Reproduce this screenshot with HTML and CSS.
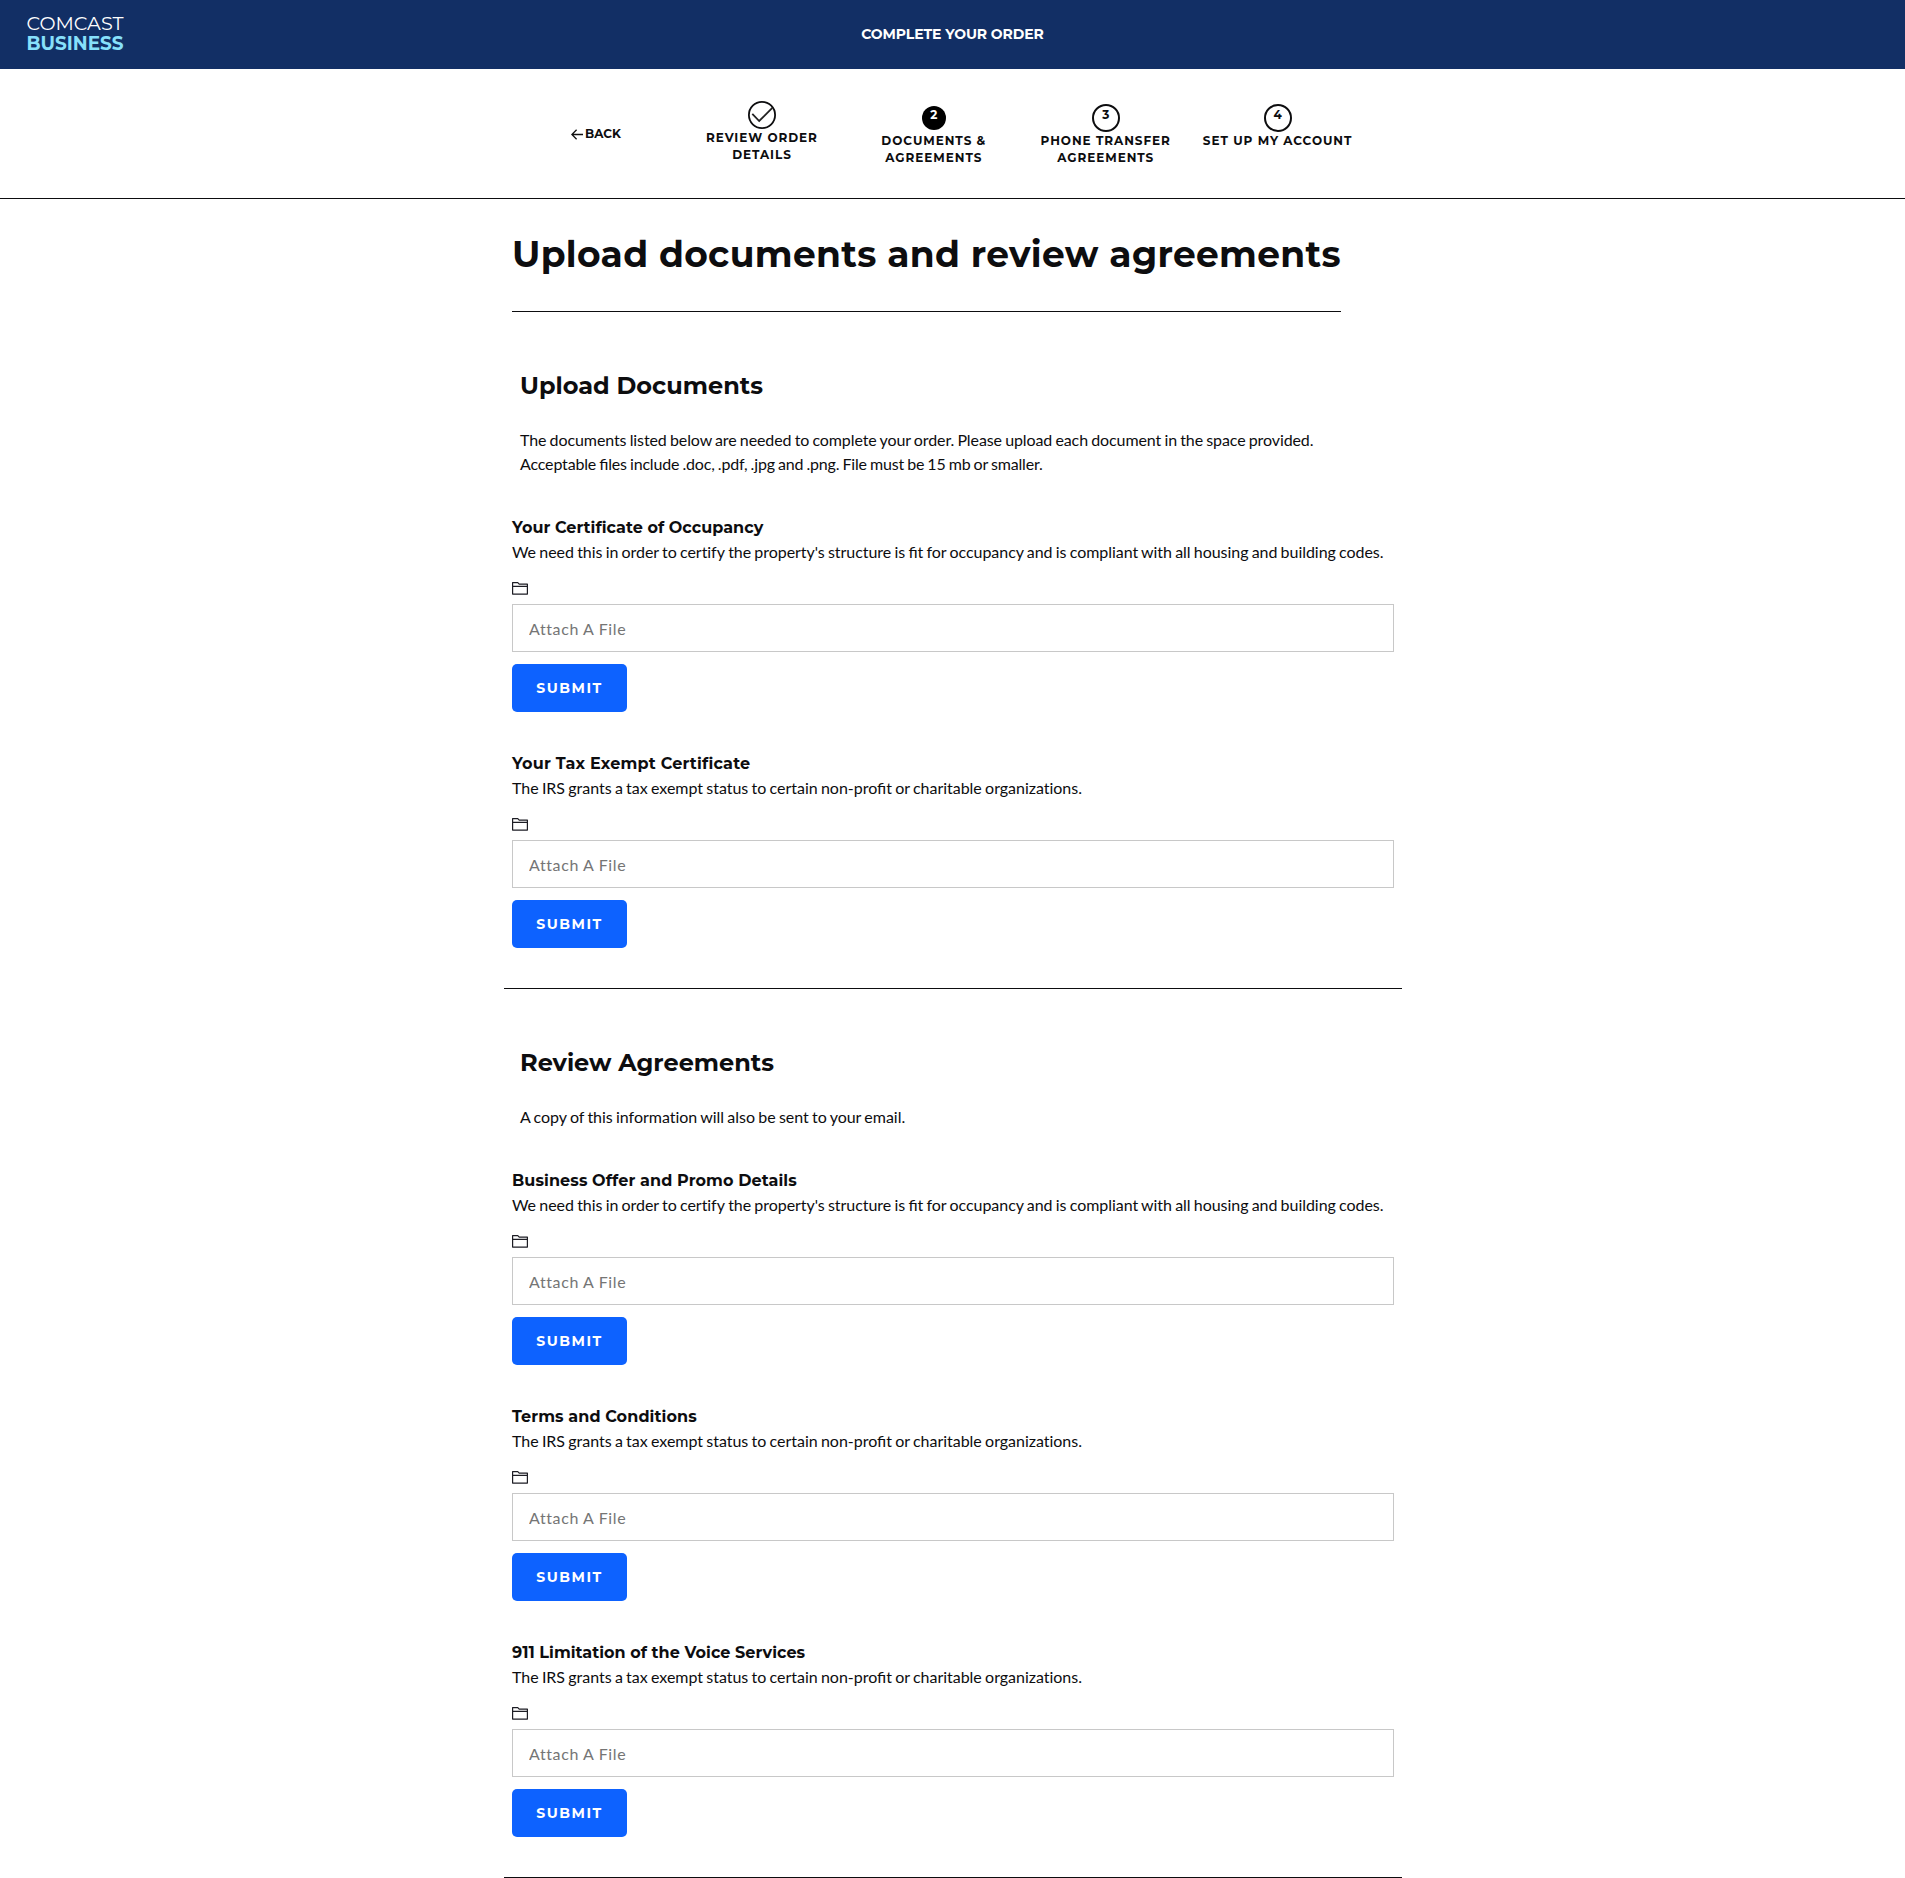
FILE: index.html
```
<!DOCTYPE html>
<html lang="en">
<head>
<meta charset="utf-8">
<title>Complete Your Order</title>
<link rel="stylesheet" href="styles.css">
</head>
<body>
<svg width="0" height="0" class="sprite" aria-hidden="true">
  <symbol id="folder" viewBox="0 0 16 13">
    <path d="M.6 12.1V.6h5.2l1.4 1.5h8.2v10zM.6 4.3h14.8" fill="none" stroke="#1d1d24" stroke-width="1.2" stroke-linejoin="round"/>
  </symbol>
</svg>
<header class="topbar">
  <svg class="logo" width="98" height="38" viewBox="0 0 98 38" role="img" aria-label="Comcast Business">
    <text class="logo-top" x="-.5" y="17.3" textLength="97" lengthAdjust="spacingAndGlyphs">COMCAST</text>
    <text class="logo-bottom" x="-.5" y="36.5" textLength="97" lengthAdjust="spacingAndGlyphs">BUSINESS</text>
  </svg>
  <div class="topbar-title">COMPLETE YOUR ORDER</div>
</header>
<nav class="stepper">
  <div class="steps">
    <a class="back"><svg width="12" height="11" viewBox="0 0 12 11"><path d="M12 5.5H1M5.6 .8L.9 5.5l4.7 4.7" fill="none" stroke="#111" stroke-width="1.3"/></svg>BACK</a>
    <div class="step done"><svg class="check" width="28" height="28" viewBox="0 0 28 28"><circle cx="14" cy="14" r="13.1" fill="none" stroke="#0d0d0f" stroke-width="1.8"/><path d="M4.3 12.8l6.9 7.2L24.3 6.8" fill="none" stroke="#222" stroke-width="1.8"/></svg><span>REVIEW ORDER<br>DETAILS</span></div>
    <div class="step"><b class="num current">2</b><span>DOCUMENTS &amp;<br>AGREEMENTS</span></div>
    <div class="step"><b class="num">3</b><span>PHONE TRANSFER<br>AGREEMENTS</span></div>
    <div class="step"><b class="num">4</b><span>SET UP MY ACCOUNT</span></div>
  </div>
</nav>
<main class="content">
  <h1 class="page-title">Upload documents and review agreements</h1>
  <section class="section">
    <h2>Upload Documents</h2>
    <p class="intro">The documents listed below are needed to complete your order. Please upload each document in the space provided.<br><span class="tight">Acceptable files include .doc, .pdf, .jpg and .png. File must be 15 mb or smaller.</span></p>
    <form class="item">
      <h3>Your Certificate of Occupancy</h3>
      <p>We need this in order to <span class="plain">certify</span> the property's structure is fit for occupancy and is compliant with all housing and building codes.</p>
      <svg class="folder" width="16" height="13"><use href="#folder"/></svg>
      <input class="file" type="text" placeholder="Attach A File">
      <button class="submit" type="button">SUBMIT</button>
    </form>
    <form class="item">
      <h3 class="wide">Your Tax Exempt Certificate</h3>
      <p class="loose">The IRS grants a tax exempt status to certain non-profit or charitable <span class="plain">organizations.</span></p>
      <svg class="folder" width="16" height="13"><use href="#folder"/></svg>
      <input class="file" type="text" placeholder="Attach A File">
      <button class="submit" type="button">SUBMIT</button>
    </form>
  </section>
  <section class="section">
    <h2>Review Agreements</h2>
    <p class="intro loose">A copy of this <span class="plain">information</span> will also be sent to your email.</p>
    <form class="item">
      <h3 class="medium">Business Offer and Promo Details</h3>
      <p>We need this in order to <span class="plain">certify</span> the property's structure is fit for occupancy and is compliant with all housing and building codes.</p>
      <svg class="folder" width="16" height="13"><use href="#folder"/></svg>
      <input class="file" type="text" placeholder="Attach A File">
      <button class="submit" type="button">SUBMIT</button>
    </form>
    <form class="item">
      <h3 class="medium">Terms and Conditions</h3>
      <p class="loose">The IRS grants a tax exempt status to certain non-profit or charitable <span class="plain">organizations.</span></p>
      <svg class="folder" width="16" height="13"><use href="#folder"/></svg>
      <input class="file" type="text" placeholder="Attach A File">
      <button class="submit" type="button">SUBMIT</button>
    </form>
    <form class="item">
      <h3>911 Limitation of the Voice Services</h3>
      <p class="loose">The IRS grants a tax exempt status to certain non-profit or charitable <span class="plain">organizations.</span></p>
      <svg class="folder" width="16" height="13"><use href="#folder"/></svg>
      <input class="file" type="text" placeholder="Attach A File">
      <button class="submit" type="button">SUBMIT</button>
    </form>
  </section>
</main>
</body>
</html>
```
FILE: styles.css
```
* { box-sizing: border-box; }
body { margin: 0; background: #fff; color: #0d0d0f; font: 16px/24px Lato, sans-serif; }
h1, h2, h3, p { margin: 0; }
h1, h2, h3, .topbar, .stepper, .submit { font-family: Montserrat, Inter, sans-serif; }
h1, h2, h3 { font-weight: 700; }
.sprite { position: absolute; }

.topbar { height: 69px; background: #122f65; color: #fff; display: grid; grid-template-columns: 1fr auto 1fr; align-items: start; }
.logo { margin: 13px 0 0 27px; overflow: visible; }
.logo-top { font: 400 19.5px Montserrat, Lato, sans-serif; fill: #fff; }
.logo-bottom { font: 700 19px Montserrat, Lato, sans-serif; fill: #87e0fb; }
.topbar-title { font-size: 14px; font-weight: 700; line-height: 20px; letter-spacing: -.1px; padding-top: 24px; }

.stepper { height: 130px; border-bottom: 1px solid #0d0d0f; }
.steps { width: 898px; margin: 0 auto; padding: 32px 0 0 67px; display: grid; grid-template-columns: 105.5px repeat(4, 171.9px); }
.back { display: flex; align-items: center; gap: 2.5px; height: 16px; margin-top: 25px; font-size: 12px; font-weight: 700; line-height: 16px; }
.step { display: flex; flex-direction: column; align-items: center; padding-top: 3px; font-size: 12px; font-weight: 700; line-height: 17px; letter-spacing: .95px; text-align: center; }
.step.done { padding-top: 0; }
.check { display: block; }
.num { width: 28px; height: 28px; border: 2px solid #0d0d0f; border-radius: 50%; font-weight: 700; letter-spacing: 0; }
.num.current { width: 24px; height: 24px; margin: 2px 0; background: #000; color: #fff; border: 0; }

.content { width: 898px; margin: 0 0 0 calc(50% - 448.5px); }
.page-title { width: 829px; height: 113px; margin-left: 8px; padding-top: 33px; border-bottom: 1px solid #0d0d0f; font-size: 36px; line-height: 44px; letter-spacing: .32px; white-space: nowrap; }
.section { padding-top: 59px; border-bottom: 1px solid #0d0d0f; }
.section h2 { margin-left: 16px; font-size: 24px; line-height: 30px; }
p { letter-spacing: -.045px; word-spacing: -.8px; font-feature-settings: "liga" 1; white-space: nowrap; }
.intro { margin: 27px 0 40px 16px; letter-spacing: -.095px; }
.loose { letter-spacing: -.02px; }
.tight { letter-spacing: -.17px; }
.plain { font-feature-settings: "liga" 0; }
.item { display: flex; flex-direction: column; align-items: flex-start; height: 236px; padding: 0 8px; }
.item h3 { font-size: 16px; line-height: 24px; letter-spacing: .04px; }
.item h3.medium { letter-spacing: .09px; }
.item h3.wide { letter-spacing: .2px; }
.folder { margin: 18px 0 9px; }
.file { width: 100%; height: 48px; padding: 0 16px; border: 1px solid #c8c8c8; border-radius: 0; background: #fff; font: 16px Lato, sans-serif; letter-spacing: .6px; }
.file::placeholder { color: #757575; }
.submit { width: 115px; height: 48px; margin-top: 12px; padding: 0; border: 0; border-radius: 5px; background: #0d62ff; color: #fff; font-size: 14px; font-weight: 700; letter-spacing: 1.5px; }
```
